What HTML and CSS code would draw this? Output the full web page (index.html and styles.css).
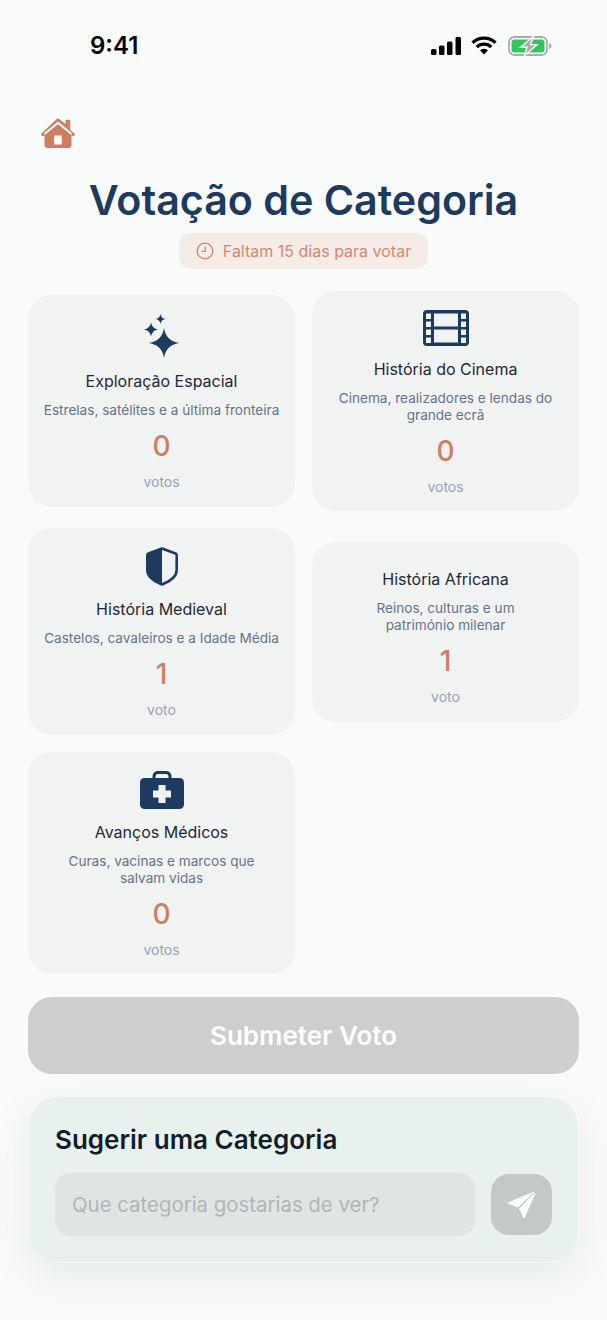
FILE: index.html
```html
<!DOCTYPE html>
<html lang="pt">
<head>
<meta charset="utf-8">
<title>Votação de Categoria</title>
<link rel="stylesheet" href="styles.css">
</head>
<body>
<main class="page">
  <header class="status">
    <span class="time">9:41</span>
    <div class="status-icons">
      <svg class="i-signal" viewBox="0 0 30 18"><rect x="0" y="12" width="5.5" height="6" rx="1.5"/><rect x="8" y="8.500" width="5.500" height="9.500" rx="1.500"/><rect x="16" y="4.500" width="5.500" height="13.500" rx="1.500"/><rect x="24.500" y="0" width="5.500" height="18" rx="1.500"/></svg>
      <svg class="i-wifi" viewBox="0 0 26 19"><path d="M1.500 6.800a16.500 16.500 0 0 1 23 0M5.700 11a10.500 10.500 0 0 1 14.600 0" fill="none" stroke="#000" stroke-width="3.300"/><path d="M9 14.300a6 6 0 0 1 8 0L13 18.500z"/></svg>
      <svg class="i-battery" viewBox="0 0 44 20"><rect x="1" y="1" width="38" height="18" rx="5.500" fill="none" stroke="#a9acab" stroke-width="1.800"/><rect x="3.500" y="3.500" width="33" height="13" rx="3" fill="#32c55e"/><path d="M41 7v6c1.600-.5 2.500-1.600 2.500-3S42.600 7.500 41 7z" fill="#a9acab"/><path d="M25.500 0.500 12.500 11.200H19L16.500 19.500 29 8.800H22.500z" fill="#a9acab" stroke="#f9fbfa" stroke-width="1.400"/></svg>
    </div>
  </header>

  <a class="home" aria-label="Início">
    <svg viewBox="0 0 34 31"><path fill="#cd7f62" d="M17 1.500c.5 0 1 .2 1.400.5l6.100 5V3.700c0-.6.500-1 1-1h2.800c.6 0 1 .4 1 1v9.300l3.800 3.200c.8.600.9 1.600.3 2.300-.6.700-1.700.8-2.400.2l-.5-.4V28c0 1.700-1.300 3-3 3H6.500c-1.700 0-3-1.300-3-3V18.300l-.5.400c-.7.600-1.800.5-2.400-.2-.6-.7-.5-1.700.3-2.300L15.600 2c.4-.3.900-.5 1.400-.5z"/><path fill="#cd7f62" stroke="#f9fbfa" stroke-width="2" d="M3.500 17 17 5.800 30.500 17v0"/><rect x="13.200" y="18.500" width="7.600" height="9" fill="#f9fbfa"/></svg>
  </a>

  <h1 class="title">Votação de Categoria</h1>
  <div class="deadline-wrap">
    <div class="deadline">
      <svg class="i-clock" viewBox="0 0 18 18"><circle cx="9" cy="9" r="7.800" fill="none" stroke="#d08a72" stroke-width="1.300"/><path d="M9.300 4.500V9.400H5.300" fill="none" stroke="#d08a72" stroke-width="1.300"/></svg>
      <span>Faltam 15 dias para votar</span>
    </div>
  </div>

  <section class="grid">
    <div class="col col-left">
      <article class="card card-stars">
        <svg class="icon i-stars" viewBox="0 0 37 44"><path fill="#1d3a5f" d="M21 14Q23 27 36 29Q23 31 21 44Q19 31 6 29Q19 27 21 14z"/><path fill="#1d3a5f" d="M8 8.500Q9 14.500 15 15.500Q9 16.500 8 22.500Q7 16.500 1 15.500Q7 14.500 8 8.500z"/><path fill="#1d3a5f" d="M17.500 0Q18.200 4.300 22.500 5Q18.200 5.700 17.500 10Q16.800 5.700 12.500 5Q16.800 4.300 17.500 0z"/></svg>
        <h2 class="card-title">Exploração Espacial</h2>
        <p class="card-desc">Estrelas, satélites e a última fronteira</p>
        <div class="count">0</div>
        <div class="unit">votos</div>
      </article>
      <article class="card">
        <svg class="icon i-shield" viewBox="0 0 32 39"><path fill="none" stroke="#1d3a5f" stroke-width="2.600" stroke-linejoin="round" d="M16 1.500 29.500 6.500C30.300 6.800 30.700 7.400 30.700 8.200V23C30.700 28 26 33.500 16 37.500 6 33.500 1.300 28 1.300 23V8.200C1.300 7.400 1.700 6.800 2.500 6.500z"/><path fill="#1d3a5f" d="M16 1.500V37.500C6 33.500 1.300 28 1.300 23V8.200C1.300 7.400 1.700 6.800 2.500 6.500z"/></svg>
        <h2 class="card-title">História Medieval</h2>
        <p class="card-desc">Castelos, cavaleiros e a Idade Média</p>
        <div class="count">1</div>
        <div class="unit">voto</div>
      </article>
      <article class="card card-medic">
        <svg class="icon i-case" viewBox="0 0 44 38"><path fill="none" stroke="#1d3a5f" stroke-width="3" d="M14 9V5.500C14 3.300 15.300 1.500 17.500 1.500h9C28.700 1.500 30 3.300 30 5.500V9"/><rect x="0" y="7" width="44" height="31" rx="4.500" fill="#1d3a5f"/><path fill="#f1f2f2" d="M18.500 14h7v5.500H31v7h-5.500V32h-7v-5.500H13v-7h5.500z"/></svg>
        <h2 class="card-title">Avanços Médicos</h2>
        <p class="card-desc">Curas, vacinas e marcos que<br>salvam vidas</p>
        <div class="count">0</div>
        <div class="unit">votos</div>
      </article>
    </div>
    <div class="col col-right">
      <article class="card card-cinema">
        <svg class="icon i-film" viewBox="0 0 46 36"><path fill="#1d3a5f" fill-rule="evenodd" d="M4 0h38a4 4 0 0 1 4 4v28a4 4 0 0 1-4 4H4a4 4 0 0 1-4-4V4a4 4 0 0 1 4-4zM3 4v5h5V3.500H3.500zM3 11.500v5.500h5v-5.500zM3 19.500V25h5v-5.500zM3 27.500V33h5v-5.500zM38 3.500V9h5V3.500zM38 11.500V17h5v-5.500zM38 19.500V25h5v-5.500zM38 27.500V33h5v-5.500zM11 3.500V16.500H35V3.500zM11 19.500V32.500H35V19.500z"/></svg>
        <h2 class="card-title">História do Cinema</h2>
        <p class="card-desc">Cinema, realizadores e lendas do<br>grande ecrã</p>
        <div class="count">0</div>
        <div class="unit">votos</div>
      </article>
      <article class="card card-plain">
        <h2 class="card-title">História Africana</h2>
        <p class="card-desc">Reinos, culturas e um<br>património milenar</p>
        <div class="count">1</div>
        <div class="unit">voto</div>
      </article>
    </div>
  </section>

  <button class="submit" type="button">Submeter Voto</button>

  <section class="suggest">
    <h2 class="suggest-title">Sugerir uma Categoria</h2>
    <div class="suggest-row">
      <div class="field">Que categoria gostarias de ver?</div>
      <button class="send" type="button" aria-label="Enviar">
        <svg viewBox="0 0 30 30"><path fill="#fff" stroke="#fff" stroke-linejoin="round" d="M27 2 1 13 11 17z"/><path fill="#fff" stroke="#fff" stroke-linejoin="round" d="M28 3 12.500 18.500 17 28z"/></svg>
      </button>
    </div>
  </section>
</main>
</body>
</html>
```
FILE: styles.css
```css
* { box-sizing: border-box; }
html, body { margin: 0; padding: 0; }
body {
  width: 607px;
  height: 1320px;
  overflow: hidden;
  background: #f9fbfa;
  font-family: Inter, "Liberation Sans", sans-serif;
}
.page { padding: 0 28px; }

.status {
  display: flex;
  justify-content: space-between;
  align-items: center;
  height: 90px;
  margin: 0 -28px;
  padding: 1px 55px 0 90px;
}
.time { font-size: 24px; font-weight: 600; color: #000; line-height: 30px; }
.status-icons { display: flex; align-items: center; gap: 10px; }
.i-signal { width: 30px; height: 18px; }
.i-wifi { width: 26px; height: 19px; }
.i-battery { width: 44px; height: 20px; margin-left: 1px; }

.home { display: block; width: 34px; height: 31px; margin: 27px 0 0 13px; }
.home svg { display: block; width: 34px; height: 31px; }

.title {
  margin: 27px 0 0;
  font-size: 41.2px;
  line-height: 50px;
  font-weight: 600;
  color: #1d3a5f;
  text-align: center;
}
.deadline-wrap { display: flex; justify-content: center; margin-top: 8px; }
.deadline {
  display: flex;
  align-items: center;
  gap: 9px;
  height: 36px;
  padding: 0 17px;
  border-radius: 12px;
  background: #f5ebe7;
  color: #d08a72;
  font-size: 16px;
}
.i-clock { width: 18px; height: 18px; }

.grid { display: flex; gap: 17px; align-items: flex-start; margin-top: 22px; }
.col { flex: 1 1 0; display: flex; flex-direction: column; gap: 17px; min-width: 0; }
.col-left { padding-top: 4px; }

.card {
  display: flex;
  flex-direction: column;
  align-items: center;
  padding: 19px 17px 17px;
  border-radius: 24px;
  background: #f1f2f2;
  text-align: center;
}
.card-stars { margin-bottom: 4px; }
.card-cinema { margin-bottom: 14px; padding-bottom: 16px; }
.card-medic { padding-bottom: 16px; }
.card-plain { padding-top: 26px; }
.icon { display: block; margin-bottom: 12px; }
.i-stars { width: 37px; height: 44px; }
.i-film { width: 46px; height: 36px; }
.i-shield { width: 32px; height: 39px; }
.i-case { width: 44px; height: 38px; }

.card-title { margin: 0; font-size: 16px; line-height: 22px; font-weight: 400; color: #1f2937; }
.card-desc { margin: 10px 0 0; font-size: 13.6px; line-height: 17px; color: #64748b; white-space: nowrap; }
.count { margin-top: 10px; font-size: 28px; line-height: 34px; font-weight: 500; color: #cd7f62; }
.unit { margin-top: 11px; font-size: 14px; line-height: 16px; color: #94a3b8; }

.submit {
  display: block;
  width: 100%;
  height: 77px;
  margin-top: 23px;
  border: 0;
  border-radius: 24px;
  background: #cdced0;
  color: #fff;
  font: 600 26px/30px Inter, "Liberation Sans", sans-serif;
}

.suggest {
  height: 167px;
  margin-top: 22px;
  padding: 25px 26px 0;
  border: 1px solid #f7faf9;
  border-radius: 30px;
  background: #e8f1ee;
  box-shadow: 0 14px 40px rgba(70, 100, 90, 0.11);
}
.suggest-title { margin: 0; font-size: 26px; line-height: 36px; font-weight: 600; color: #111d2b; }
.suggest-row { display: flex; align-items: center; gap: 16px; margin-top: 15px; }
.field {
  flex: 1 1 auto;
  height: 63px;
  padding-left: 17px;
  border-radius: 16px;
  background: #e0e5e3;
  color: #b0b6b6;
  font-size: 20.4px;
  line-height: 63px;
}
.send {
  display: flex;
  align-items: center;
  justify-content: center;
  flex: 0 0 61px;
  height: 61px;
  padding: 0;
  border: 0;
  border-radius: 18px;
  background: #c3c8c8;
}
.send svg { width: 30px; height: 30px; }
```
